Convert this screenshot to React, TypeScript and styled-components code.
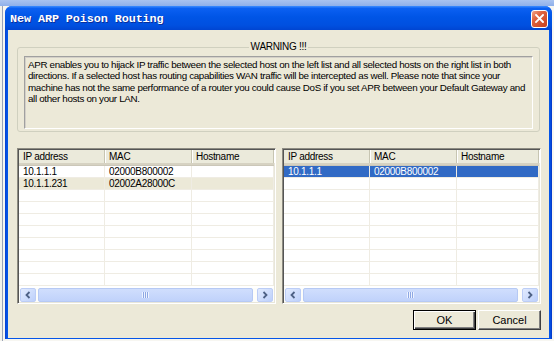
import React from "react";
import styled, { createGlobalStyle } from "styled-components";

type Host = { ip: string; mac: string; name?: string; state?: "active" | "inactive" };

const leftHosts: Host[] = [
  { ip: "10.1.1.1", mac: "02000B800002" },
  { ip: "10.1.1.231", mac: "02002A28000C", state: "inactive" },
];

const rightHosts: Host[] = [{ ip: "10.1.1.1", mac: "02000B800002", state: "active" }];

const ROWS = 10;

const notice =
  "APR enables you to hijack IP traffic between the selected host on the left list and all selected hosts on the right list in both\n" +
  "directions. If a selected host has routing capabilities WAN traffic will be intercepted as well. Please note that since your\n" +
  "machine has not the same performance of a router you could cause DoS if you set APR between your Default Gateway and\n" +
  "all other hosts on your LAN.";

const GlobalStyle = createGlobalStyle`
  html, body {
    margin: 0;
    padding: 0;
    width: 554px;
    height: 341px;
    overflow: hidden;
  }
  body {
    font-family: "Liberation Sans", Arial, sans-serif;
  }
`;

const HostList: React.FC<{ hosts: Host[] }> = ({ hosts }) => {
  const rows: (Host | null)[] = [...hosts];
  while (rows.length < ROWS) rows.push(null);
  return (
    <ListFrame>
      <HeaderRow>
        <HeaderCell>IP address</HeaderCell>
        <HeaderCell>MAC</HeaderCell>
        <HeaderCell>Hostname</HeaderCell>
      </HeaderRow>
      <Rows>
        {rows.map((h, i) => (
          <Row key={i} $state={h?.state}>
            <Cell>{h?.ip}</Cell>
            <Cell>{h?.mac}</Cell>
            <Cell>{h?.name}</Cell>
          </Row>
        ))}
      </Rows>
      <ScrollBar>
        <ScrollButton>
          <svg width="8" height="8" viewBox="0 0 8 8">
            <path d="M5.5 1 L2.5 4 L5.5 7" fill="none" stroke="#4D6185" strokeWidth="1.8" />
          </svg>
        </ScrollButton>
        <Thumb>
          <Grip />
        </Thumb>
        <ScrollButton>
          <svg width="8" height="8" viewBox="0 0 8 8">
            <path d="M2.5 1 L5.5 4 L2.5 7" fill="none" stroke="#4D6185" strokeWidth="1.8" />
          </svg>
        </ScrollButton>
      </ScrollBar>
    </ListFrame>
  );
};

export default function App() {
  return (
    <>
      <GlobalStyle />
      <Desktop>
        <Window>
          <TitleBar>
            <Title>New ARP Poison Routing</Title>
            <CloseButton>
              <svg width="9" height="9" viewBox="0 0 9 9">
                <path d="M1 1 L8 8 M8 1 L1 8" stroke="#fff" strokeWidth="1.9" strokeLinecap="square" />
              </svg>
            </CloseButton>
          </TitleBar>
          <Body>
            <GroupBox>
              <Legend>WARNING !!!</Legend>
              <Notice>{notice}</Notice>
            </GroupBox>
            <Lists>
              <HostList hosts={leftHosts} />
              <HostList hosts={rightHosts} />
            </Lists>
            <ButtonRow>
              <Button $default>OK</Button>
              <Button>Cancel</Button>
            </ButtonRow>
          </Body>
        </Window>
      </Desktop>
    </>
  );
}

const Desktop = styled.div`
  width: 554px;
  height: 341px;
  box-sizing: border-box;
  padding: 6px 2px 2px 5px;
  background:
    linear-gradient(#a9c3f0, #8fb0ea) top / 100% 6px no-repeat,
    linear-gradient(90deg, #f3f2ec 0 2px, #9aa3b8 2px 3px, #f7f6f1 3px) #f3f2ec;
`;

const Window = styled.div`
  width: 547px;
  height: 333px;
  display: flex;
  flex-direction: column;
  border-radius: 7px 7px 0 0;
  background: linear-gradient(90deg, #0a3fd0, #0555e8 2px, #0555e8 calc(100% - 2px), #0233c4);
  overflow: hidden;
`;

const TitleBar = styled.div`
  height: 24px;
  flex: none;
  display: flex;
  align-items: center;
  justify-content: space-between;
  padding: 0 4px 0 5px;
  background: linear-gradient(
    #3d8dff 0%,
    #0b60f2 10%,
    #0055e6 45%,
    #0050e0 80%,
    #0045d2 100%
  );
`;

const Title = styled.div`
  font-family: "Liberation Mono", "Courier New", monospace;
  font-weight: 700;
  font-size: 11.8px;
  color: #fff;
  letter-spacing: -0.1px;
  text-shadow: 1px 1px 0 #0a2f9c;
  padding-top: 1px;
`;

const CloseButton = styled.div`
  width: 15px;
  height: 16px;
  margin-top: 1px;
  display: flex;
  align-items: center;
  justify-content: center;
  border: 1px solid #fff;
  border-radius: 3px;
  background: linear-gradient(135deg, #f0a58a 0%, #e06440 35%, #c9401c 100%);
`;

const Body = styled.div`
  flex: 1;
  margin: 0 3px 3px;
  background: #ece9d8;
  display: flex;
  flex-direction: column;
  padding: 11px 8px 8px 9px;
  font-size: 10px;
  letter-spacing: -0.3px;
  color: #000;
`;

const GroupBox = styled.fieldset`
  margin: 0 1px 0 0;
  padding: 0 6px 2px;
  border: 1px solid #d0d0bf;
  border-radius: 3px;
  min-width: 0;
`;

const Legend = styled.legend`
  margin: 0 auto;
  padding: 0 2px;
  line-height: 12px;
  font-size: 10px;
`;

const Notice = styled.div`
  margin-top: 3px;
  height: 67px;
  padding: 2px 3px;
  border: 1px solid;
  border-color: #a0a0a0 #ffffff #ffffff #a0a0a0;
  box-shadow: inset 1px 1px 0 #d4d0c8;
  background: #ece9d8;
  white-space: pre;
  font-size: 9.8px;
  letter-spacing: -0.33px;
  line-height: 11.3px;
  overflow: hidden;
`;

const Lists = styled.div`
  margin-top: 16px;
  display: grid;
  grid-template-columns: 1fr 1fr;
  gap: 6px;
`;

const ListFrame = styled.div`
  height: 152px;
  display: flex;
  flex-direction: column;
  border: 1px solid;
  border-color: #8e8c82 #ffffff #ffffff #8e8c82;
  box-shadow: inset 1px 1px 0 #555, inset -1px -1px 0 #e8e6da;
  background: #fff;
  padding: 1px;
  overflow: hidden;
`;

const columns = "86px 87px 1fr";

const HeaderRow = styled.div`
  height: 13px;
  flex: none;
  display: grid;
  grid-template-columns: ${columns};
  background: #ebeadb;
  border-bottom: 2px solid #d6d2c2;
  box-shadow: 0 1px 0 #cbc7b8;
`;

const HeaderCell = styled.div`
  padding-left: 4px;
  line-height: 13px;
  border-right: 1px solid #c7c5b2;
  box-shadow: 1px 0 0 #fff;
  white-space: nowrap;
  overflow: hidden;
`;

const Rows = styled.div`
  flex: 1;
  margin-top: 1px;
  overflow: hidden;
`;

const Row = styled.div<{ $state?: "active" | "inactive" }>`
  height: 11px;
  display: grid;
  grid-template-columns: ${columns};
  border-bottom: 1px solid #efece3;
  line-height: 11px;
  background: ${(p) => (p.$state === "active" ? "#316ac5" : p.$state === "inactive" ? "#ece9d8" : "#fff")};
  color: ${(p) => (p.$state === "active" ? "#fff" : "#000")};
`;

const Cell = styled.div`
  padding-left: 4px;
  border-right: 1px solid #efece3;
  white-space: nowrap;
  overflow: hidden;
`;

const ScrollBar = styled.div`
  height: 14px;
  flex: none;
  display: flex;
  align-items: stretch;
  gap: 2px;
  background: #fdfdfa;
  padding: 0 1px;
`;

const ScrollButton = styled.div`
  width: 14px;
  display: flex;
  align-items: center;
  justify-content: center;
  border: 1px solid #bccdf6;
  border-radius: 2px;
  background: linear-gradient(135deg, #e2ebfe, #bdd0fb);
`;

const Thumb = styled.div`
  flex: 1;
  margin-right: 2px;
  display: flex;
  align-items: center;
  justify-content: center;
  border: 1px solid #b6c9f4;
  border-radius: 2px;
  background: linear-gradient(#d0defd, #c0d2fb);
`;

const Grip = styled.div`
  width: 7px;
  height: 6px;
  background: repeating-linear-gradient(90deg, #eef3ff 0 1px, #8ea8e4 1px 2px);
`;

const ButtonRow = styled.div`
  margin-top: 6px;
  display: flex;
  justify-content: flex-end;
  gap: 2px;
`;

const Button = styled.button<{ $default?: boolean }>`
  width: 63px;
  height: 20px;
  padding: 0;
  font-family: "Liberation Sans", Arial, sans-serif;
  font-size: 11px;
  color: #000;
  background: #ece9d8;
  border: 1px solid;
  border-color: ${(p) => (p.$default ? "#000" : "#fff #404040 #404040 #fff")};
  box-shadow: ${(p) =>
    p.$default
      ? "inset 1px 1px 0 #fff, inset -1px -1px 0 #404040, inset -2px -2px 0 #808080"
      : "inset -1px -1px 0 #808080"};
`;
